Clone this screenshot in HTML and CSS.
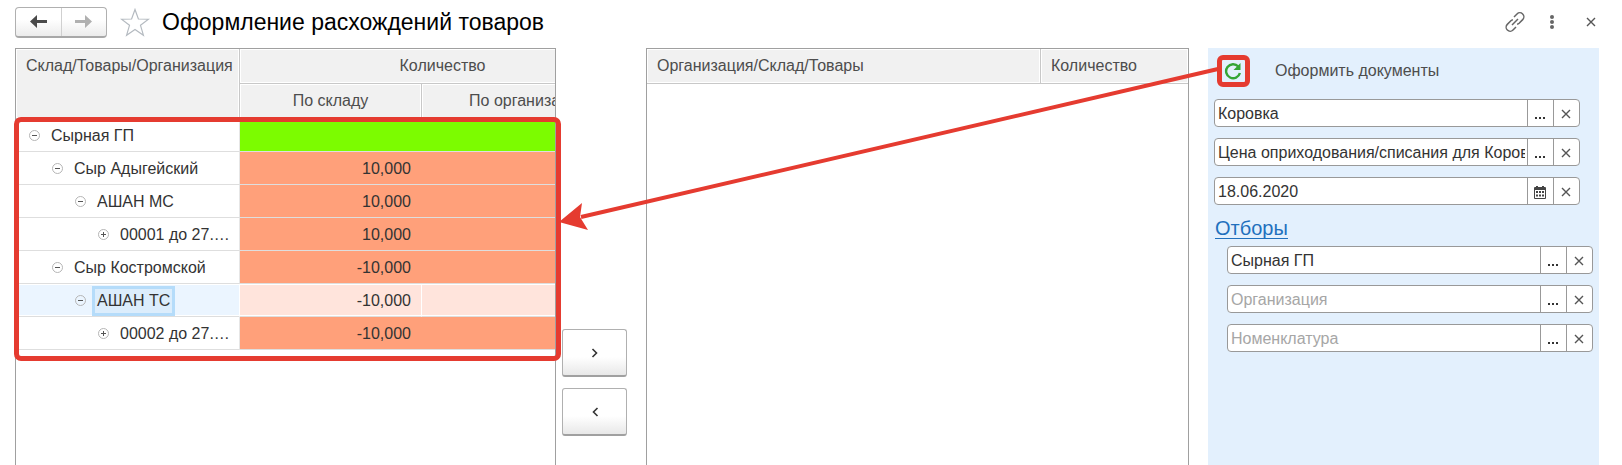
FILE: index.html
```html
<!DOCTYPE html>
<html lang="ru">
<head>
<meta charset="utf-8">
<title>Оформление расхождений товаров</title>
<link rel="stylesheet" href="styles.css">
</head>
<body>
<svg class="defs" width="0" height="0" aria-hidden="true">
  <symbol id="minus" viewBox="0 0 11 11"><circle cx="5.5" cy="5.5" r="5" fill="none" stroke="#b5b5b5"/><path d="M3 5.5h5" stroke="#555"/></symbol>
  <symbol id="plus" viewBox="0 0 11 11"><circle cx="5.5" cy="5.5" r="5" fill="none" stroke="#b5b5b5"/><path d="M3 5.5h5M5.5 3v5" stroke="#555"/></symbol>
  <symbol id="cross" viewBox="0 0 10 10"><path d="M1 1l8 8M9 1l-8 8" fill="none" stroke="#555" stroke-width="1.4"/></symbol>
  <symbol id="dots" viewBox="0 0 12 3"><path d="M1 0h2v2H1zM5 0h2v2H5zM9 0h2v2H9z" fill="#333"/></symbol>
</svg>
<header class="top">
  <div class="nav">
    <button class="nav-btn" aria-label="Назад"><svg width="17" height="13" viewBox="0 0 17 13"><path d="M0 6.500L7 0v5h10v3H7v5z" fill="#4a4a4a"/></svg></button>
    <button class="nav-btn" aria-label="Вперёд"><svg width="17" height="13" viewBox="0 0 17 13"><path d="M17 6.500L10 0v5H0v3h10v5z" fill="#b0b0b0"/></svg></button>
  </div>
  <button class="plain star" aria-label="В избранное"><svg width="30" height="29" viewBox="0 0 30 29"><path d="M15 1.500l3.400 9.500 10.100.2-8 6.100 2.900 9.900L15 21.400l-8.400 5.800 2.900-9.900-8-6.100 10.100-.2z" fill="#fff" stroke="#b4bac0" stroke-width="1.200"/></svg></button>
  <h1>Оформление расхождений товаров</h1>
  <div class="tools">
    <button class="plain" aria-label="Ссылка"><svg width="20" height="20" viewBox="0 0 20 20"><path d="M9 5l3-3a3.900 3.900 0 0 1 5.700 5.600l-3.600 3.600a3.900 3.900 0 0 1-2 1M11 15l-3 3a3.900 3.900 0 0 1-5.700-5.600l3.600-3.600a3.900 3.900 0 0 1 2-1M7 13l6-6" fill="none" stroke="#666" stroke-width="1.500"/></svg></button>
    <button class="plain" aria-label="Ещё"><svg width="6" height="14" viewBox="0 0 6 14"><g fill="#666"><circle cx="3" cy="2" r="2"/><circle cx="3" cy="7" r="2"/><circle cx="3" cy="12" r="2"/></g></svg></button>
    <button class="plain" aria-label="Закрыть"><svg width="10" height="10"><use href="#cross"/></svg></button>
  </div>
</header>
<main class="work">
  <section class="source">
    <div class="panel">
      <table class="tree">
        <colgroup><col class="c-name"><col class="c-stock"><col class="c-org"></colgroup>
        <thead>
          <tr><th class="first" rowspan="2">Склад/Товары/Организация</th><th colspan="2">Количество</th></tr>
          <tr><th>По складу</th><th>По организациям</th></tr>
        </thead>
        <tbody>
          <tr class="green"><td><div class="node"><svg><use href="#minus"/></svg><span>Сырная ГП</span></div></td><td></td><td></td></tr>
          <tr><td><div class="node l1"><svg><use href="#minus"/></svg><span>Сыр Адыгейский</span></div></td><td>10,000</td><td></td></tr>
          <tr><td><div class="node l2"><svg><use href="#minus"/></svg><span>АШАН МС</span></div></td><td>10,000</td><td></td></tr>
          <tr><td><div class="node l3"><svg><use href="#plus"/></svg><span>00001 до 27.…</span></div></td><td>10,000</td><td></td></tr>
          <tr><td><div class="node l1"><svg><use href="#minus"/></svg><span>Сыр Костромской</span></div></td><td>-10,000</td><td></td></tr>
          <tr class="selected"><td><div class="node l2"><svg><use href="#minus"/></svg><span>АШАН ТС</span></div></td><td>-10,000</td><td></td></tr>
          <tr><td><div class="node l3"><svg><use href="#plus"/></svg><span>00002 до 27.…</span></div></td><td>-10,000</td><td></td></tr>
        </tbody>
      </table>
    </div>
    <div class="mark mark-rows"></div>
  </section>
  <div class="movers">
    <button class="move" aria-label="Перенести вправо"><svg width="8" height="10" viewBox="0 0 8 10"><path d="M1.500 1l4 4-4 4" fill="none" stroke="#333" stroke-width="1.600"/></svg></button>
    <button class="move" aria-label="Перенести влево"><svg width="8" height="10" viewBox="0 0 8 10"><path d="M6.500 1l-4 4 4 4" fill="none" stroke="#333" stroke-width="1.600"/></svg></button>
  </div>
  <section class="panel">
    <table class="result">
      <colgroup><col><col class="c-qty"></colgroup>
      <thead><tr><th>Организация/Склад/Товары</th><th>Количество</th></tr></thead>
    </table>
  </section>
  <aside class="side">
    <div class="actions">
      <button class="plain refresh" aria-label="Обновить"><svg width="18" height="18" viewBox="0 0 18 18"><path d="M14.300 4.500A7 7 0 1 0 15.900 11" fill="none" stroke="#35a535" stroke-width="2.400"/><path d="M16.500 1v7h-7z" fill="#35a535"/></svg></button>
      <button class="plain create">Оформить документы</button>
    </div>
    <div class="fields">
      <div class="field"><input type="text" aria-label="Организация документа" value="Коровка"><button aria-label="Выбрать"><svg class="dots"><use href="#dots"/></svg></button><button aria-label="Очистить"><svg width="10" height="10"><use href="#cross"/></svg></button></div>
      <div class="field"><input type="text" aria-label="Вид цены" value="Цена оприходования/списания для Коровки"><button aria-label="Выбрать"><svg class="dots"><use href="#dots"/></svg></button><button aria-label="Очистить"><svg width="10" height="10"><use href="#cross"/></svg></button></div>
      <div class="field"><input type="text" aria-label="Дата" value="18.06.2020"><button aria-label="Календарь"><svg width="12" height="13" viewBox="0 0 12 13"><path d="M2 0h2v1h4V0h2v1h1q1 0 1 1v10q0 1-1 1H1q-1 0-1-1V2q0-1 1-1h1z" fill="#444"/><path d="M1 4h10v8H1z" fill="#fff"/><path d="M2 5h2v2H2zM5 5h2v2H5zM8 5h2v2H8zM2 8.500h2v2H2zM5 8.500h2v2H5zM8 8.500h2v2H8z" fill="#444"/></svg></button><button aria-label="Очистить"><svg width="10" height="10"><use href="#cross"/></svg></button></div>
    </div>
    <a class="filters-link" href="#filters">Отборы</a>
    <div class="fields filters" id="filters">
      <div class="field"><input type="text" aria-label="Склад" value="Сырная ГП"><button aria-label="Выбрать"><svg class="dots"><use href="#dots"/></svg></button><button aria-label="Очистить"><svg width="10" height="10"><use href="#cross"/></svg></button></div>
      <div class="field"><input type="text" aria-label="Организация" placeholder="Организация"><button aria-label="Выбрать"><svg class="dots"><use href="#dots"/></svg></button><button aria-label="Очистить"><svg width="10" height="10"><use href="#cross"/></svg></button></div>
      <div class="field"><input type="text" aria-label="Номенклатура" placeholder="Номенклатура"><button aria-label="Выбрать"><svg class="dots"><use href="#dots"/></svg></button><button aria-label="Очистить"><svg width="10" height="10"><use href="#cross"/></svg></button></div>
    </div>
    <div class="mark mark-refresh"></div>
    <svg class="arrow" width="660" height="170" viewBox="0 0 660 170"><path d="M659 8L22 156" stroke="#e53b30" stroke-width="4"/><path d="M0 161l23-19-2 14 8 13z" fill="#e53b30"/></svg>
  </aside>
</main>
</body>
</html>
```
FILE: styles.css
```css
* { box-sizing: border-box; }
body {
  margin: 0;
  height: 100vh;
  display: flex;
  flex-direction: column;
  overflow: hidden;
  background: #fff;
  color: #333;
  font: 16px/20px "Liberation Sans", Arial, sans-serif;
}
button, input { font: inherit; color: inherit; }
svg { display: block; }
.defs { position: absolute; }
.plain { padding: 0; border: 0; background: none; }

.top {
  display: flex;
  align-items: center;
  height: 48px;
  padding: 0 26px 4px 15px;
}
.nav {
  display: flex;
  width: 92px;
  height: 31px;
  border: 1px solid #b0b0b0;
  border-bottom: 2px solid #a8a8a8;
  border-radius: 4px;
  background: linear-gradient(#fff 40%, #ececec);
}
.nav-btn {
  flex: 1;
  display: grid;
  place-items: center;
  padding: 0;
  border: 0;
  background: none;
}
.nav-btn + .nav-btn { border-left: 1px solid #d0d0d0; }
.star { margin-left: 13px; }
h1 {
  margin: 0 0 0 12px;
  color: #000;
  font-size: 23px;
  line-height: 28px;
  font-weight: 400;
}
.tools {
  display: flex;
  align-items: center;
  gap: 24px;
  margin-left: auto;
}
.tools .plain:last-child { margin-left: 7px; }

.work {
  flex: 1;
  min-height: 0;
  display: grid;
  grid-template-columns: minmax(0, 541fr) 90px minmax(0, 543fr) 410px;
  padding: 0 23px 0 15px;
}
.source {
  position: relative;
  display: grid;
  min-height: 0;
}
.panel {
  overflow: hidden;
  border: 1px solid #a0a0a0;
  border-bottom: 0;
}
table {
  table-layout: fixed;
  border-collapse: separate;
  border-spacing: 0;
}
.tree { width: 630px; }
.result { width: 100%; }
.c-name { width: 224px; }
.c-stock { width: 182px; }
.c-qty { width: 147px; }
th {
  height: 35px;
  padding: 0;
  border: solid #c8c8c8;
  border-width: 0 1px 1px 0;
  background: #f1f1f1;
  box-shadow: inset 0 0 0 1px #fff;
  color: #4d4d4d;
  font-weight: 400;
  white-space: nowrap;
}
.tree .first {
  padding: 7px 10px;
  vertical-align: top;
  text-align: left;
}
.result th { padding: 0 10px; text-align: left; }
.result th:last-child { border-right: 0; }
td {
  height: 33px;
  padding: 1px 11px 0 0;
  border-bottom: 1px solid #dedede;
  background: #ffa07a;
  text-align: right;
}
td:first-child {
  padding: 1px 0 0;
  border-right: 1px solid #e6e6e6;
  background: #fff;
}
.green td:not(:first-child) { background: #7cfc00; }
.selected td {
  padding-right: 10px;
  border-right: 1px solid #fff;
  background: #ffe4dc;
  box-shadow: inset 0 1px #fff, inset 0 -1px #fff;
}
.selected td:first-child { background: #ebf5ff; }
.node {
  display: flex;
  align-items: center;
  gap: 6px;
  padding-left: 13px;
  white-space: nowrap;
}
.node svg { width: 11px; height: 11px; }
.node span {
  padding: 2px;
  border: 3px solid transparent;
}
.l1 { padding-left: 36px; }
.l2 { padding-left: 59px; }
.l3 { padding-left: 82px; }
.selected span { border-color: #b5dcfa; background: #dcedfc; }

.movers {
  display: flex;
  flex-direction: column;
  gap: 11px;
  padding: 281px 19px 0 6px;
}
.move {
  display: grid;
  place-items: center;
  height: 48px;
  padding: 0;
  border: 1px solid #b0b0b0;
  border-bottom: 2px solid #a0a0a0;
  border-radius: 3px;
  background: linear-gradient(#fff 60%, #e8e8e8);
}

.side {
  position: relative;
  margin-left: 19px;
  background: #e3f0fd;
}
.actions {
  display: flex;
  align-items: center;
  gap: 33px;
  height: 46px;
  padding-left: 16px;
}
.create { color: #4d4d4d; }
.fields {
  display: grid;
  gap: 11px;
  padding: 5px 19px 0 6px;
}
.field {
  display: flex;
  height: 28px;
  overflow: hidden;
  border: 1px solid #999;
  border-radius: 4px;
  background: #fff;
}
.field input {
  flex: 1;
  min-width: 0;
  margin-right: 2px;
  padding: 1px 0 0 3px;
  border: 0;
  outline: 0;
  background: none;
}
.field input::placeholder { color: #a6a6a6; opacity: 1; }
.field button {
  display: grid;
  place-items: center;
  width: 26px;
  padding: 2px 1px 0 0;
  border: 0;
  border-left: 1px solid #999;
  background: none;
}
.dots { width: 12px; height: 3px; margin-top: 9px; }
.filters-link {
  display: inline-block;
  margin: 13px 0 0 7px;
  border-bottom: 1px solid #1f70bd;
  color: #1f70bd;
  font-size: 20px;
  line-height: 20px;
  text-decoration: none;
}
.filters { padding: 6px 6px 0 19px; }

.mark {
  position: absolute;
  border: 5px solid #e53b30;
  pointer-events: none;
}
.mark-rows {
  top: 69px;
  left: -1px;
  right: -5px;
  height: 244px;
  border-radius: 7px;
}
.mark-refresh {
  top: 7px;
  left: 9px;
  width: 33px;
  height: 32px;
  border-radius: 6px;
}
.arrow {
  position: absolute;
  top: 13px;
  right: 380px;
  pointer-events: none;
}
```
